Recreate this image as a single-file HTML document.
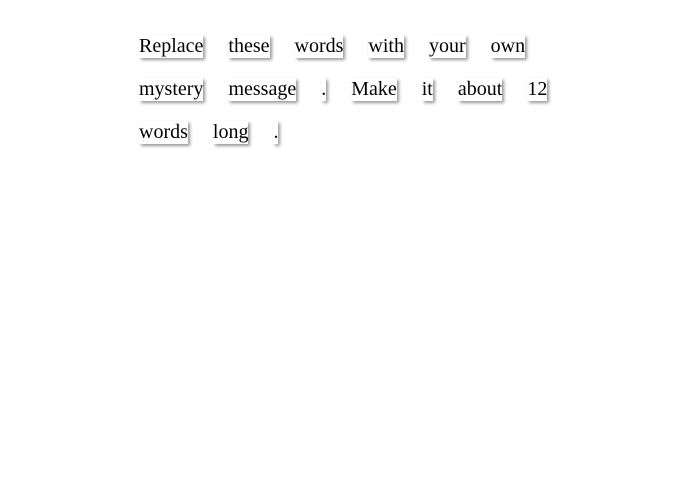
<!DOCTYPE html>
<html><head><style>
html,body{margin:0;padding:0;background:#fff;width:677px;height:480px;overflow:hidden}
.c{position:absolute;left:139px;top:35px;width:430px;font-family:"Liberation Serif",serif;font-size:20px;line-height:23px;color:#000}
.c span{display:inline-block;box-shadow:2px 2px 3px #999;margin:0 20px 20px 0;background:#fff}
</style></head><body>
<div class="c"><span>Replace</span> <span>these</span> <span>words</span> <span>with</span> <span>your</span> <span>own</span> <span>mystery</span> <span>message</span> <span>.</span> <span>Make</span> <span>it</span> <span>about</span> <span>12</span> <span>words</span> <span>long</span> <span>.</span></div>
</body></html>
